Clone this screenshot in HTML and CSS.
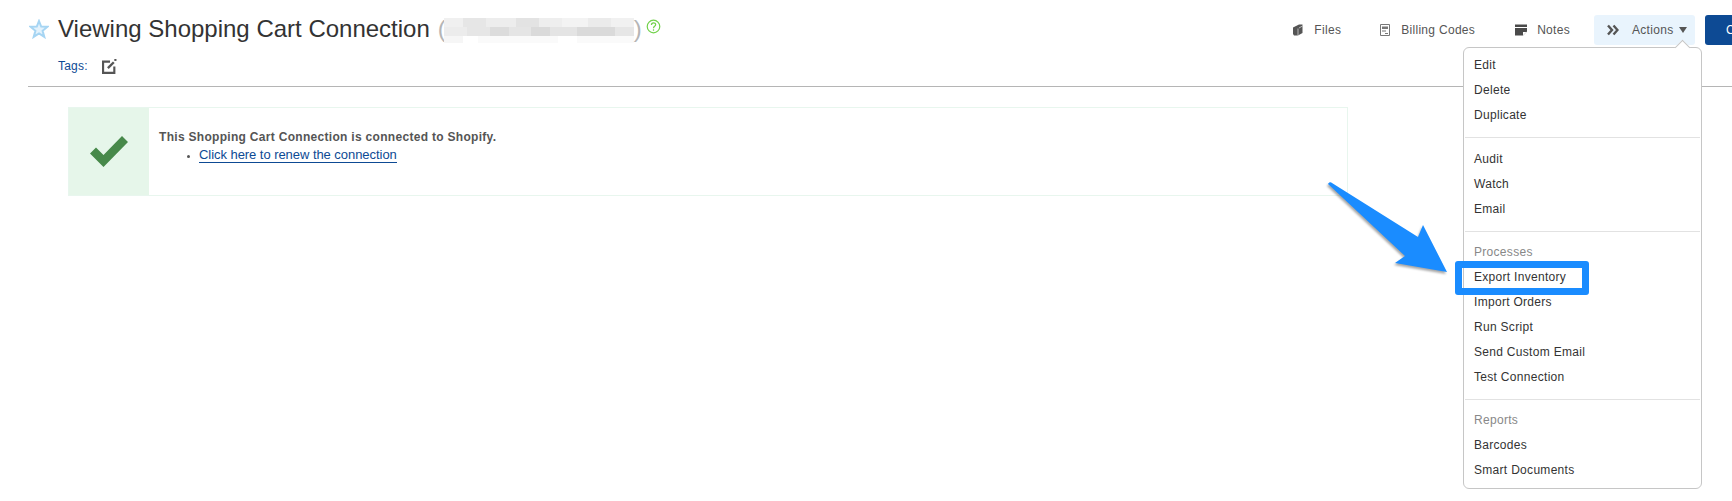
FILE: index.html
```html
<!DOCTYPE html>
<html lang="en">
<head>
    <meta charset="UTF-8">
    <title>Viewing Shopping Cart Connection</title>
    <link rel="stylesheet" href="styles.css">
</head>
<body>
    <header class="page-header">
        <div class="title-block">
            <div class="title-row">
                <svg class="star-icon" viewBox="0 0 20 20"><path d="M10 2l2.200 5.500 6.300.3-4.900 4 1.700 6.100L10 14.400l-5.300 3.500 1.700-6.100-4.900-4 6.300-.3z"/></svg>
                <h1>Viewing Shopping Cart Connection</h1>
                <span class="paren">(</span><span class="redacted"></span><span class="paren paren-close">)</span>
                <svg class="help-icon" viewBox="0 0 16 16"><circle cx="8" cy="8" r="6.700"/><path d="M5.800 6.300c0-3 4.500-3 4.500-.2 0 1.800-2.300 1.700-2.300 3.700"/><path d="M8 11v1.500"/></svg>
            </div>
            <div class="tags-row">
                <span class="tags-label">Tags:</span>
                <svg class="edit-icon" viewBox="0 0 14 14"><path d="M7.500 2.500H1v10.500h10.500V7"/><path d="M5.500 8.500L11 3" stroke-width="2.200"/><path d="M12.500 0v1.800"/></svg>
            </div>
        </div>
        <nav class="toolbar">
            <a class="tool">
                <svg class="tool-icon" viewBox="0 0 10 12"><path d="M0 3.500L6 .5h3.500V9L5 11.500H1L0 10z" fill="#555"/><path d="M5 4.500v7M6 4l3.500-2" stroke="#fff" stroke-width=".6"/></svg>
                Files
            </a>
            <a class="tool">
                <svg class="tool-icon" viewBox="0 0 10 12"><path d="M.5.500h9v11h-9z" fill="none" stroke="#777"/><path d="M2 2.500h6v2.500H2zM2 6.500h4v1H2zM5 9h3v1H5z" fill="#777"/></svg>
                Billing Codes
            </a>
            <a class="tool">
                <svg class="tool-icon tool-icon-wide" viewBox="0 0 12 11"><path d="M0 0h12v2.500H0zM0 3.500h12V7L8 11H0z" fill="#4a4a4a"/><path d="M8 7.500h3.500L8 11z" fill="#fff"/></svg>
                Notes
            </a>
            <div class="tool tool-actions">
                <svg class="tool-icon tool-icon-wide" viewBox="0 0 12 10"><path d="M1 .500L5 5 1 9.500M6.500.500l4 4.500-4 4.500" fill="none" stroke="#555" stroke-width="2.400"/></svg>
                <span class="actions-label">Actions</span>
                <span class="caret"></span>
                <div class="menu">
                    <ul class="menu-group">
                        <li>Edit</li>
                        <li>Delete</li>
                        <li>Duplicate</li>
                    </ul>
                    <ul class="menu-group">
                        <li>Audit</li>
                        <li>Watch</li>
                        <li>Email</li>
                    </ul>
                    <ul class="menu-group">
                        <li class="menu-heading">Processes</li>
                        <li class="menu-marked">Export Inventory</li>
                        <li>Import Orders</li>
                        <li>Run Script</li>
                        <li>Send Custom Email</li>
                        <li>Test Connection</li>
                    </ul>
                    <ul class="menu-group">
                        <li class="menu-heading">Reports</li>
                        <li>Barcodes</li>
                        <li>Smart Documents</li>
                    </ul>
                </div>
            </div>
            <a class="primary-button">C</a>
        </nav>
    </header>

    <main class="content">
        <div class="notice">
            <div class="notice-icon">
                <svg class="check-icon" viewBox="0 0 38 31"><path d="M0 17.500l6-6 7.500 7.500L32 0l6 6-24.500 25z"/></svg>
            </div>
            <div class="notice-body">
                <strong>This Shopping Cart Connection is connected to Shopify.</strong>
                <ul class="notice-list">
                    <li><a class="notice-link">Click here to renew the connection</a></li>
                </ul>
            </div>
        </div>
    </main>

    <svg class="callout-arrow" viewBox="0 0 140 110">
        <path d="M9 12c1-2 3-2 4-1l86 54 5-12 24 47-52-9 10-7z"/>
    </svg>
</body>
</html>
```

FILE: styles.css
```css
body {
    margin: 0;
    height: 501px;
    overflow: hidden;
    background: #fff;
    font-family: "Liberation Sans", Arial, sans-serif;
    font-size: 12px;
    color: #333;
}

.page-header {
    display: flex;
    justify-content: space-between;
    height: 86px;
    margin-left: 28px;
    border-bottom: 1px solid #b5b5b5;
}

.title-row {
    display: flex;
    align-items: center;
    height: 30px;
    margin-top: 14px;
}

.star-icon {
    width: 20px;
    height: 20px;
    margin: 0 9px 0 1px;
    fill: #e3f2fc;
    stroke: #a6d5f3;
    stroke-width: 2;
}

h1 {
    margin: 0;
    font-size: 24px;
    font-weight: normal;
    color: #333;
}

.paren {
    font-size: 24px;
    color: #b5b5b5;
    margin-left: 8px;
}

.paren-close {
    margin-left: 0;
}

.redacted {
    width: 190px;
    height: 25px;
    margin: 3px 0 0 -2px;
    background-image:
        linear-gradient(90deg, #f0f0f0 0 10%, #e6e6e6 10% 22%, #ededed 22% 38%, #e3e3e3 38% 50%, #eeeeee 50% 62%, #f3f3f3 62% 76%, #ebebeb 76% 88%, #f1f1f1 88%),
        linear-gradient(90deg, #ececec 0 12%, #e6e6e6 12% 24%, #dcdcdc 24% 34%, #e5e5e5 34% 46%, #dadada 46% 56%, #e4e4e4 56% 70%, #dadada 70% 90%, #e6e6e6 90%),
        linear-gradient(90deg, #f6f6f6 0 10%, #fff 10% 18%, #fafafa 18% 60%, #fff 60% 70%, #fafafa 70%);
    background-repeat: no-repeat;
    background-size: 100% 9px, 100% 9px, 100% 7px;
    background-position: 0 0, 0 9px, 0 18px;
}

.help-icon {
    width: 15px;
    height: 15px;
    margin: -5px 0 0 4px;
    fill: none;
    stroke: #72d14b;
    stroke-width: 1.300;
}

.tags-row {
    display: flex;
    align-items: center;
    height: 20px;
    margin: 12px 0 0 30px;
}

.tags-label {
    color: #0d4a94;
    letter-spacing: .2px;
}

.edit-icon {
    width: 15px;
    height: 15px;
    margin-left: 14px;
    fill: none;
    stroke: #555;
    stroke-width: 2;
}

.toolbar {
    display: flex;
    align-items: flex-start;
    margin-top: 15px;
    height: 30px;
    color: #555;
}

.tool {
    display: flex;
    align-items: center;
    height: 30px;
    margin-right: 40px;
    letter-spacing: .3px;
}

.tool:first-child {
    margin-right: 39px;
}

.tool-icon {
    width: 10px;
    height: 12px;
    margin-right: 11px;
}

.tool-icon-wide {
    width: 12px;
    margin-right: 10px;
}

.tool-actions {
    position: relative;
    width: 101px;
    margin: 0 10px 0 -16px;
    padding-left: 13px;
    box-sizing: border-box;
    background: #e9f4fd;
    border-radius: 3px;
}

.tool-actions .tool-icon-wide {
    margin-right: 13px;
}

.caret {
    width: 0;
    height: 0;
    margin-left: 6px;
    border: 4px solid transparent;
    border-top: 6px solid #555;
    border-bottom: 0;
}

.menu {
    position: absolute;
    top: 32px;
    right: -7px;
    width: 237px;
    background: #fff;
    border: 1px solid #c6c6c6;
    border-radius: 6px;
    color: #333;
    z-index: 2;
}

.menu::before {
    content: "";
    position: absolute;
    top: -6px;
    right: 13px;
    width: 10px;
    height: 10px;
    background: #fff;
    border: 1px solid #c6c6c6;
    border-width: 1px 0 0 1px;
    transform: rotate(45deg);
}

.menu-group {
    list-style: none;
    margin: 0 1px;
    padding: 8px 0 9px;
    border-bottom: 1px solid #e2e2e2;
}

.menu-group:first-child {
    padding-top: 5px;
}

.menu-group:nth-child(2) {
    padding-top: 9px;
}

.menu-group:last-child {
    border-bottom: 0;
    padding-bottom: 5px;
}

.menu-group li {
    position: relative;
    height: 25px;
    line-height: 25px;
    padding-left: 9px;
}

.menu-heading {
    color: #888;
}

.menu-marked::after {
    content: "";
    position: absolute;
    top: -4px;
    left: -10px;
    width: 120px;
    height: 20px;
    border: 7px solid #1a8cff;
    border-radius: 3px;
}

.primary-button {
    display: block;
    flex-shrink: 0;
    width: 27px;
    height: 30px;
    padding-left: 21px;
    box-sizing: border-box;
    line-height: 30px;
    white-space: nowrap;
    color: #fff;
    background: #0d4a94;
    border-radius: 3px 0 0 3px;
}

.content {
    padding: 20px 0 0 68px;
}

.notice {
    display: flex;
    width: 1280px;
    height: 89px;
    box-sizing: border-box;
    border: 1px solid #e8f6ee;
}

.notice-icon {
    display: flex;
    align-items: center;
    justify-content: center;
    width: 80px;
    background: #e6f6ea;
}

.check-icon {
    width: 38px;
    height: 31px;
    fill: #47894a;
}

.notice-body {
    padding: 22px 0 0 10px;
    color: #555;
}

.notice-body strong {
    letter-spacing: .3px;
}

.notice-list {
    margin: 3px 0 0;
    padding-left: 40px;
    font-size: 13px;
    letter-spacing: -.05px;
}

.notice-list li::marker {
    color: #555;
    font-size: 9px;
}

.notice-link {
    color: #0d4a94;
    border-bottom: 1px solid #0d4a94;
}

.callout-arrow {
    position: absolute;
    top: 172px;
    left: 1319px;
    width: 140px;
    height: 110px;
    fill: #1a8cff;
    filter: drop-shadow(-1px 2px 1px rgba(0, 0, 0, .35));
}
```
